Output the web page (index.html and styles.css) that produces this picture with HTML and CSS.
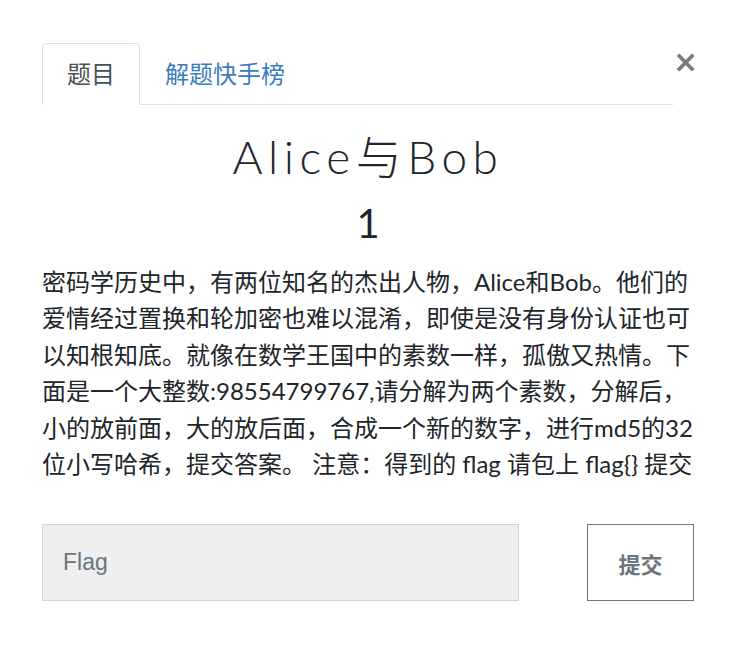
FILE: index.html
```html
<!DOCTYPE html>
<html lang="zh-CN">
<head>
  <meta charset="UTF-8"/>
  <title>Alice与Bob</title>
  <link rel="stylesheet" href="styles.css">
</head>
<body>

<div class="challenge">
  <div class="challenge-head">
    <nav class="tabs">
      <a class="tab active" href="#">题目</a>
      <a class="tab" href="#">解题快手榜</a>
    </nav>
    <button class="close-btn">&times;</button>
  </div>

  <h2 class="challenge-name">Alice与Bob</h2>
  <h3 class="challenge-value">1</h3>

  <p class="challenge-desc">密码学历史中，有两位知名的杰出人物，Alice和Bob。他们的爱情经过置换和轮加密也难以混淆，即使是没有身份认证也可以知根知底。就像在数学王国中的素数一样，孤傲又热情。下面是一个大整数:98554799767,请分解为两个素数，分解后，小的放前面，大的放后面，合成一个新的数字，进行md5的32位小写哈希，提交答案。 注意：得到的 flag 请包上 flag{} 提交</p>

  <form class="submit-row">
    <input class="flag-input" type="text" placeholder="Flag">
    <button class="submit-btn" type="button">提交</button>
  </form>
</div>

</body>
</html>
```

FILE: styles.css
```css
body {
  margin: 0;
  padding: 0;
  background-color: #fff;
  color: #212529;
  font-family: Lato, "Noto Sans CJK SC", sans-serif;
}

.challenge {
  width: 652px;
  padding: 43px 0 0 42px;
}

.challenge-head {
  display: flex;
  align-items: flex-start;
}

.tabs {
  flex: 1;
  display: flex;
  border-bottom: 1px solid #dee2e6;
}

.tab {
  display: block;
  padding: 15px 24px;
  margin-bottom: -1px;
  font-size: 24px;
  line-height: 30px;
  color: #3a7cbd;
  text-decoration: none;
  border: 1px solid transparent;
  border-radius: 5px 5px 0 0;
}

.tab.active {
  color: #495057;
  border-color: #dee2e6 #dee2e6 #fff;
}

.close-btn {
  width: 21px;
  padding: 0;
  margin-top: 2px;
  background: none;
  border: none;
  color: #7a7a7a;
  font-family: "DejaVu Sans", sans-serif;
  font-size: 30px;
  font-weight: bold;
  line-height: 34px;
  cursor: pointer;
}

.challenge-name {
  margin: 24px 0 0;
  text-align: center;
  font-size: 46px;
  font-weight: 300;
  line-height: 56px;
  letter-spacing: 5.5px;
}

.challenge-value {
  margin: 14px 0 0;
  text-align: center;
  font-size: 40px;
  font-weight: 400;
  line-height: 48px;
}

.challenge-desc {
  margin: 17px 0 0;
  font-size: 24px;
  line-height: 36.4px;
  word-break: break-all;
}

.submit-row {
  display: flex;
  justify-content: space-between;
  margin-top: 42px;
}

.flag-input {
  width: 477px;
  height: 77px;
  box-sizing: border-box;
  padding: 0 20px;
  background-color: #efefef;
  border: 1px solid #ced4da;
  font-family: "Liberation Sans", sans-serif;
  font-size: 23px;
  color: #495057;
}

.flag-input::placeholder {
  color: #6c757d;
}

.submit-btn {
  width: 107px;
  height: 77px;
  background: #fff;
  border: 1px solid #6c757d;
  color: #6c757d;
  font-family: "Noto Sans CJK SC", sans-serif;
  font-size: 22px;
  font-weight: bold;
}
```
